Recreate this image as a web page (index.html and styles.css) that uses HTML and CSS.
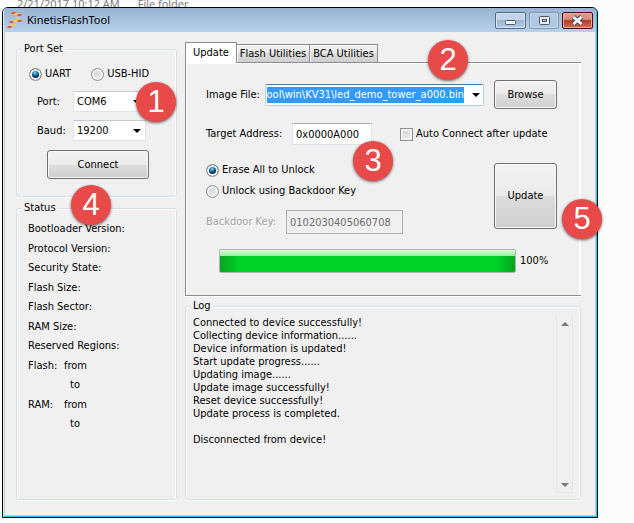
FILE: index.html
```
<!DOCTYPE html>
<html lang="en">
<head>
<meta charset="utf-8">
<title>KinetisFlashTool</title>
<link rel="stylesheet" href="styles.css">
</head>
<body>
<div class="behind"><span>2/21/2017 10:12 AM</span><span>File folder</span></div>
<div class="window">
  <div class="frame">
    <header class="titlebar">
      <svg class="logo" width="16" height="16" viewBox="0 0 16 16" aria-hidden="true">
        <g fill="#f8561f"><path d="M5 0h4l-1 2h-4z"/><path d="M11 2h4l-1 2h-4z"/><path d="M3 9h4l-1 2h-4z"/><path d="M11 8h4l-1 2h-4z"/><path d="M1 14h4l-1 2h-4z"/></g>
        <g fill="#fdc95c"><path d="M8 1h3l-1 2h-3z"/><path d="M9 5h4l-1 2h-4z"/><path d="M7 8h4l-1 2h-4z"/><path d="M5 12h4l-1 2h-4z"/></g>
      </svg>
      <h1>KinetisFlashTool</h1>
      <div class="winbtns">
        <button type="button" class="winbtn" aria-label="Minimize"><svg width="29" height="15" viewBox="0 0 29 15"><rect x="9.500" y="7.500" width="10" height="4" rx="1" fill="#f8f8f8" stroke="#535666"/></svg></button>
        <button type="button" class="winbtn faded" aria-label="Maximize"><svg width="28" height="15" viewBox="0 0 28 15"><rect x="9.500" y="3.500" width="10" height="8" rx="1" fill="#e8edf3" stroke="#535666"/><rect x="12.500" y="6.500" width="4" height="2" fill="#a8bfda" stroke="#535666"/></svg></button>
        <button type="button" class="winbtn close" aria-label="Close"><svg width="29" height="15" viewBox="0 0 29 15"><path d="M10.500 4l8 7M18.500 4l-8 7" stroke="#535666" stroke-width="5"/><path d="M10.500 4l8 7M18.500 4l-8 7" stroke="#f8f8f8" stroke-width="2.600"/></svg></button>
      </div>
    </header>
    <main class="client">
      <div class="col">
        <fieldset class="group port">
          <legend>Port Set</legend>
          <div class="types">
            <label class="opt"><input type="radio" name="type" checked>UART</label>
            <label class="opt"><input type="radio" name="type">USB-HID</label>
          </div>
          <div class="pick">
            <label for="port">Port:</label>
            <span class="drop"><select id="port"><option>COM6</option></select><svg width="8" height="4" viewBox="0 0 8 4"><path d="M0 0h8L4 4z"/></svg></span>
          </div>
          <div class="pick">
            <label for="baud">Baud:</label>
            <span class="drop"><select id="baud"><option>19200</option></select><svg width="8" height="4" viewBox="0 0 8 4"><path d="M0 0h8L4 4z"/></svg></span>
          </div>
          <button type="button" class="btn connect">Connect</button>
          <span class="mark m1">1</span>
        </fieldset>
        <fieldset class="group status">
          <legend>Status</legend>
          <div class="facts">
            <div>Bootloader Version:</div>
            <div>Protocol Version:</div>
            <div>Security State:</div>
            <div>Flash Size:</div>
            <div>Flash Sector:</div>
            <div>RAM Size:</div>
            <div>Reserved Regions:</div>
            <div class="range"><span>Flash:</span><span>from</span></div>
            <div class="range"><span></span><span class="to">to</span></div>
            <div class="range"><span>RAM:</span><span>from</span></div>
            <div class="range"><span></span><span class="to">to</span></div>
          </div>
          <span class="mark m4">4</span>
        </fieldset>
      </div>
      <div class="col">
        <section class="tabs">
          <div class="tablist" role="tablist">
            <button type="button" role="tab" class="tab active" aria-selected="true">Update</button>
            <button type="button" role="tab" class="tab">Flash Utilities</button>
            <button type="button" role="tab" class="tab">BCA Utilities</button>
          </div>
          <div class="pane" role="tabpanel">
            <div class="filerow">
              <label for="file">Image File:</label>
              <div class="combo">
                <input id="file" type="text" value="ool\win\KV31\led_demo_tower_a000.bin">
                <button type="button" aria-label="Recent files"><svg width="8" height="4" viewBox="0 0 8 4"><path d="M0 0h8L4 4z"/></svg></button>
              </div>
              <button type="button" class="btn browse">Browse</button>
            </div>
            <div class="addrrow">
              <label for="addr">Target Address:</label>
              <input id="addr" class="text addr" type="text" value="0x0000A000">
              <label class="opt auto"><input type="checkbox">Auto Connect after update</label>
            </div>
            <div class="unlock">
              <div class="choices">
                <label class="opt"><input type="radio" name="unlock" checked>Erase All to Unlock</label>
                <label class="opt"><input type="radio" name="unlock">Unlock using Backdoor Key</label>
                <div class="keyrow">
                  <label for="key">Backdoor Key:</label>
                  <input id="key" class="text key" type="text" value="0102030405060708" disabled>
                </div>
              </div>
              <button type="button" class="btn update">Update</button>
            </div>
            <div class="progress">
              <div class="bar" role="progressbar" aria-label="Update progress" aria-valuenow="100"></div>
              <span>100%</span>
            </div>
          </div>
          <span class="mark m2">2</span>
          <span class="mark m3">3</span>
          <span class="mark m5">5</span>
        </section>
        <fieldset class="group log">
          <legend>Log</legend>
          <textarea aria-label="Log" readonly>Connected to device successfully!
Collecting device information......
Device information is updated!
Start update progress......
Updating image......
Update image successfully!
Reset device successfully!
Update process is completed.

Disconnected from device!</textarea>
          <div class="scroll" aria-hidden="true">
            <svg width="8" height="4" viewBox="0 0 8 4"><path d="M0 4h8L4 0z"/></svg>
            <svg width="8" height="4" viewBox="0 0 8 4"><path d="M0 0h8L4 4z"/></svg>
          </div>
        </fieldset>
      </div>
    </main>
  </div>
</div>
</body>
</html>
```
FILE: styles.css
```
* { box-sizing: border-box; }
body {
  margin: 0;
  min-height: 100vh;
  display: flex;
  flex-direction: column;
  background: #fcfcfc;
  color: #000;
  font: 11px/14px "DejaVu Sans Condensed", "DejaVu Sans", sans-serif;
}
button, input, select, textarea { font: inherit; color: inherit; margin: 0; }
.behind {
  height: 7px;
  overflow: hidden;
  display: flex;
  gap: 18px;
  padding-left: 17px;
  color: #777;
  font: 11px/8px "Open Sans", sans-serif;
}
.window {
  flex: 1;
  display: flex;
  margin: 0 36px 5px 2px;
  border: 1px solid #000;
  border-radius: 6px 6px 0 0;
  background: #b9d1ea;
}
.frame {
  flex: 1;
  display: flex;
  flex-direction: column;
  border: 1px solid #22c5ee;
  border-top: 0;
  border-left-color: #e6f1fa;
  border-radius: 5px 5px 0 0;
}
.titlebar {
  height: 24px;
  display: flex;
  align-items: center;
  padding: 0 3px;
  border-radius: 5px 5px 0 0;
  background: linear-gradient(#98b4d2, #b9d1ea);
}
h1 {
  flex: 1;
  margin: 0 0 0 4px;
  font: 11px/16px "Noto Sans", sans-serif;
}
.winbtns { display: flex; gap: 3px; }
.winbtn {
  display: flex;
  padding: 0;
  border: 1px solid #56697f;
  border-radius: 2px;
  background: linear-gradient(#c3d4e8 50%, #9bb5d3 50%, #b4cce4);
  box-shadow: inset 0 0 0 1px #d4e2f1;
}
.faded { border-color: #8399b3; background: #b0c8e1; box-shadow: inset 0 0 0 1px #c4d8ec; }
.close {
  border-color: #4b1017;
  background: linear-gradient(#e0a093, #d28373 50%, #b63a25 50%, #cb7455);
  box-shadow: inset 0 0 0 1px #e2aa9c;
}
.client {
  flex: 1;
  display: grid;
  grid-template-columns: 161px 1fr;
  gap: 8px;
  margin: 0 1px 1px;
  padding: 10px 14px 15px 11px;
  background: #f0f0f0;
}
.col { display: flex; flex-direction: column; gap: 4px; }
.group {
  position: relative;
  min-width: 0;
  margin: 0;
  padding: 0;
  border: 1px solid #d5dfe5;
  border-radius: 3px;
  box-shadow: inset 1px 1px #fff, inset -1px 0 #fff, 0 1px #fff;
}
legend { position: relative; margin-left: 4px; padding: 0 3px; background: #f0f0f0; }
.port { height: 155px; }
.types { display: flex; gap: 20px; margin: 11px 0 10px 12px; }
.opt { display: flex; align-items: center; gap: 3px; white-space: nowrap; }
.opt input {
  appearance: none;
  width: 13px;
  height: 13px;
  border: 1px solid #8e8f8f;
  background: linear-gradient(135deg, #c5cad0, #f6f6f6);
  box-shadow: inset 0 0 0 2px #f4f4f4;
}
.opt input[type="radio"] { border-radius: 50%; }
.opt input:checked { background: radial-gradient(circle at 5px 4px, #8fdcf7 0, #1b83b5 2px, #0b3355 4px); }
.pick { display: grid; grid-template-columns: 36px 73px; align-items: center; margin: 0 0 8px 20px; }
.drop { display: grid; align-items: center; }
.drop > * { grid-area: 1 / 1; }
.drop svg { justify-self: end; margin-right: 5px; pointer-events: none; }
select {
  appearance: none;
  height: 21px;
  padding: 0 3px;
  border: 1px solid #e2e3ea;
  border-top-color: #c5c9d0;
  border-radius: 0;
  background: #fff;
}
.btn {
  padding: 0;
  border: 1px solid #707070;
  border-radius: 3px;
  background: linear-gradient(#f2f2f2, #ebebeb 50%, #dddddd 50%, #cfcfcf);
  box-shadow: inset 0 0 0 1px #f8f8f8;
}
.connect { display: block; width: 102px; height: 29px; margin: 9px 0 0 30px; }
.status { flex: 1; }
.facts { display: flex; flex-direction: column; justify-content: space-between; height: 209px; margin: 7px 0 0 11px; }
.range { display: grid; grid-template-columns: 36px 1fr; }
.to { padding-left: 6px; }
.tabs { position: relative; }
.tablist { display: flex; align-items: flex-end; height: 20px; }
.tab {
  height: 18px;
  padding: 0 3px;
  border: 1px solid #898c95;
  border-width: 1px 1px 0 0;
  background: linear-gradient(#f2f2f2, #ebebeb 50%, #dddddd 50%, #cfcfcf);
  box-shadow: inset 1px 1px #fcfcfc;
  white-space: nowrap;
}
.active {
  position: relative;
  height: 21px;
  margin-bottom: -1px;
  padding: 0 7px;
  border-left-width: 1px;
  background: #fff;
}
.pane {
  height: 234px;
  padding: 17px 24px 0 20px;
  border: 1px solid #898c95;
  border-right-width: 0;
  box-shadow: inset -2px 0 #fff, inset 1px 1px #fff, 0 1px #fff;
}
.filerow { display: grid; grid-template-columns: 59px 1fr 63px; align-items: center; }
.browse { height: 29px; }
.combo {
  display: flex;
  align-items: center;
  height: 22px;
  margin-right: 10px;
  padding: 0 3px 0 1px;
  border: 1px solid #b5cfe7;
  border-top-color: #3d7bad;
  border-radius: 2px;
  background: #fff;
}
.combo input {
  flex: 1;
  min-width: 0;
  height: 16px;
  padding: 0;
  border: 0;
  background: #39f;
  color: #fff;
  direction: rtl;
}
.combo button { display: flex; margin-left: 8px; padding: 0; border: 0; background: none; }
.addrrow { display: flex; align-items: center; margin-top: 14px; }
.addrrow > label:first-child { width: 86px; white-space: nowrap; }
.text { height: 22px; padding: 0 3px; border: 1px solid #e2e3ea; border-top-color: #abadb3; background: #fff; }
.addr { width: 80px; }
.auto { margin-left: 28px; }
.unlock { display: flex; justify-content: space-between; margin-top: 18px; }
.choices { display: flex; flex-direction: column; gap: 7px; }
.keyrow { display: flex; align-items: center; margin-top: 5px; color: #a0a0a0; }
.keyrow label { width: 80px; text-shadow: 1px 1px #fff; white-space: nowrap; }
.key { width: 117px; height: 24px; border-color: #afafaf; background: #f0f0f0; color: #6d6d6d; }
.update { width: 63px; height: 66px; }
.progress { display: flex; align-items: center; gap: 4px; margin: 15px 7px 0 13px; }
.bar {
  flex: 1;
  height: 24px;
  border: 1px solid #b2b2b2;
  border-radius: 2px;
  background:
    linear-gradient(#d3ffd6, #9af09f 6px, transparent 6px),
    linear-gradient(90deg, #06a41f, #00d328 20px, #00d328 calc(100% - 20px), #06a41f);
}
.progress span { width: 30px; }
.log { flex: 1; display: flex; margin-top: -1px; }
textarea {
  flex: 1;
  min-width: 0;
  margin: 3px 0 0 7px;
  padding: 0;
  border: 0;
  outline: 0;
  resize: none;
  overflow: hidden;
  background: none;
  line-height: 13px;
}
.scroll {
  width: 17px;
  margin: 2px 7px 6px 0;
  padding: 7px 0 5px;
  display: flex;
  flex-direction: column;
  align-items: center;
  justify-content: space-between;
  border: 1px solid #e6e6e6;
  border-width: 0 1px 1px;
}
.scroll svg { fill: #777; }
.mark {
  position: absolute;
  width: 40px;
  height: 40px;
  border-radius: 50%;
  background: #e84a4a;
  box-shadow: 0 1px 3px #0009;
  color: #fff;
  font: 31px/40px "Liberation Sans", sans-serif;
  text-align: center;
}
.m1 { left: 119px; top: 26px; }
.m2 { left: 243px; top: -2px; }
.m3 { left: 168px; top: 99px; }
.m4 { left: 54px; top: -30px; }
.m5 { left: 377px; top: 157px; }
```
